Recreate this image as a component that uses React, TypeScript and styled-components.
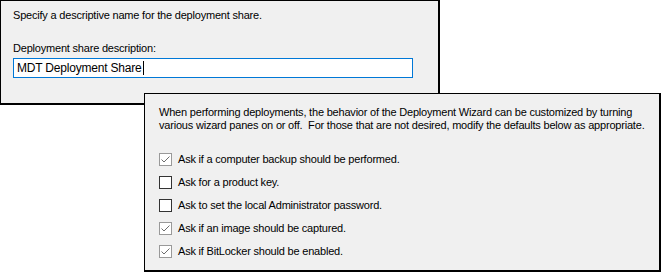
import React from "react";
import styled, { createGlobalStyle } from "styled-components";

const Global = createGlobalStyle`
  html, body { margin: 0; padding: 0; background: #ffffff; }
  body { font-family: "Liberation Sans", Arial, sans-serif; font-size: 11px; color: #000; }
`;

const Canvas = styled.div`
  position: relative;
  width: 661px;
  height: 272px;
  overflow: hidden;
  background: #ffffff;
`;

const Window = styled.div<{ $left: number; $top: number; $w: number; $h: number }>`
  position: absolute;
  left: ${(p) => p.$left}px;
  top: ${(p) => p.$top}px;
  width: ${(p) => p.$w}px;
  height: ${(p) => p.$h}px;
  box-sizing: border-box;
  background: #f0f0f0;
  border: 1px solid #000;
  border-right-width: 2px;
  border-bottom-width: 2px;
  display: flex;
  flex-direction: column;
`;

const NamePane = styled.div`
  display: flex;
  flex-direction: column;
  padding: 8px 0 0 12px;
`;

const Text = styled.div`
  line-height: 13px;
  white-space: pre;
  letter-spacing: -0.2px;
`;

const FieldLabel = styled(Text)`
  margin-top: 20px;
`;

const TextBox = styled.div`
  margin-top: 3px;
  width: 400px;
  height: 20px;
  box-sizing: border-box;
  border: 1px solid #0078d7;
  background: #fff;
  display: flex;
  align-items: center;
  padding-left: 3px;
  font-size: 12px;
  letter-spacing: -0.2px;
`;

const Caret = styled.span`
  display: inline-block;
  width: 1px;
  height: 14px;
  background: #000;
  margin-left: 1px;
`;

const OptionsPane = styled.div`
  display: flex;
  flex-direction: column;
  padding: 12px 0 0 14px;
`;

const CheckList = styled.div`
  display: flex;
  flex-direction: column;
  gap: 10px;
  margin-top: 21px;
`;

const Row = styled.div`
  display: flex;
  align-items: center;
  gap: 6px;
  height: 13px;
`;

const Box = styled.span<{ $checked: boolean }>`
  width: 13px;
  height: 13px;
  box-sizing: border-box;
  border: 1px solid ${(p) => (p.$checked ? "#999" : "#333")};
  background: #fff;
  display: flex;
  align-items: center;
  justify-content: center;
`;

const Check = () => (
  <svg width="11" height="11" viewBox="0 0 11 11">
    <path d="M1.5 5.5 L4 8 L9.5 2.5" fill="none" stroke="#6d6d6d" strokeWidth="1" />
  </svg>
);

const options = [
  { label: "Ask if a computer backup should be performed.", checked: true },
  { label: "Ask for a product key.", checked: false },
  { label: "Ask to set the local Administrator password.", checked: false },
  { label: "Ask if an image should be captured.", checked: true },
  { label: "Ask if BitLocker should be enabled.", checked: true },
];

export default function App() {
  return (
    <>
      <Global />
      <Canvas>
        <Window $left={0} $top={0} $w={440} $h={105}>
          <NamePane>
            <Text>Specify a descriptive name for the deployment share.</Text>
            <FieldLabel>Deployment share description:</FieldLabel>
            <TextBox>
              MDT Deployment Share
              <Caret />
            </TextBox>
          </NamePane>
        </Window>
        <Window $left={144} $top={93} $w={517} $h={179}>
          <OptionsPane>
            <Text>When performing deployments, the behavior of the Deployment Wizard can be customized by turning</Text>
            <Text>various wizard panes on or off.  For those that are not desired, modify the defaults below as appropriate.</Text>
            <CheckList>
              {options.map((o) => (
                <Row key={o.label}>
                  <Box $checked={o.checked}>{o.checked && <Check />}</Box>
                  <Text>{o.label}</Text>
                </Row>
              ))}
            </CheckList>
          </OptionsPane>
        </Window>
      </Canvas>
    </>
  );
}
